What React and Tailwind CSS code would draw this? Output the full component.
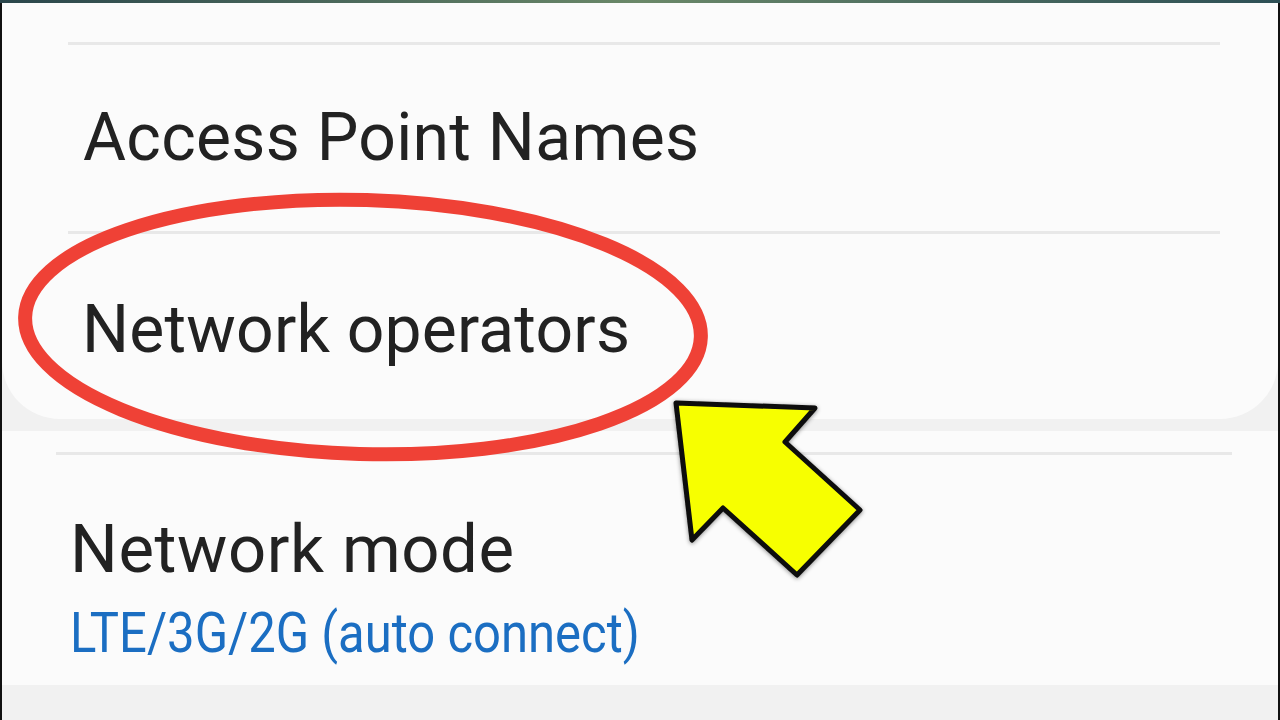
import React from 'react';

const Divider = ({ className = '' }) => (
  <div className={`h-[3px] bg-[#e8e8e8] ${className}`} />
);

// red circle + yellow arrow drawn on top of the screenshot
const Annotation = () => (
  <svg
    className="pointer-events-none absolute inset-0"
    width="1280"
    height="720"
    viewBox="0 0 1280 720"
  >
    <defs>
      <filter id="arrowShadow" x="-20%" y="-20%" width="140%" height="140%">
        <feDropShadow dx="0" dy="1" stdDeviation="2" floodColor="#000" floodOpacity="0.45" />
      </filter>
    </defs>
    <ellipse
      cx="363"
      cy="327"
      rx="338"
      ry="127"
      fill="none"
      stroke="#ef4136"
      strokeWidth="14"
      transform="rotate(1.7 363 327)"
    />
    <polygon
      points="676,403 815,408 785,442 860,510 797,575 723,508 692,540"
      fill="#f7ff00"
      stroke="#0a0a0a"
      strokeWidth="5"
      strokeLinejoin="round"
      filter="url(#arrowShadow)"
    />
  </svg>
);

export default function App() {
  return (
    <div className="relative h-[720px] w-[1280px] overflow-hidden bg-[#f1f1f1] font-[Roboto,sans-serif]">
      <div className="h-[3px] bg-linear-to-r from-[#2a464b] via-[#6a8868] to-[#2d4f55]" />

      <div className="flex h-[717px] flex-col border-x-2 border-[#111]">
        {/* top card */}
        <div className="flex h-[416px] flex-col rounded-b-[58px] bg-[#fbfbfb] pt-[39px]">
          <Divider className="ml-[66px] w-[1152px]" />
          <div className="flex h-[186px] items-center pl-[81px]">
            <span className="text-[66px] leading-none tracking-[0.3px] text-[#222]">Access Point Names</span>
          </div>
          <Divider className="ml-[66px] w-[1152px]" />
          <div className="flex flex-1 items-center pl-[80px] pt-[6px]">
            <span className="text-[66px] leading-none tracking-[0.2px] text-[#222]">Network operators</span>
          </div>
        </div>

        {/* second card */}
        <div className="mt-[12px] flex h-[254px] flex-col bg-[#fbfbfb] pt-[21px]">
          <Divider className="ml-[54px] w-[1176px]" />
          <div className="flex flex-col items-start pl-[68px] pt-[61px]">
            <span className="text-[67px] leading-none tracking-[0.6px] text-[#222]">Network mode</span>
            <span className="mt-[22px] inline-block origin-left scale-x-[0.875] text-[56px] leading-none text-[#1b6ec2]">
              LTE/3G/2G (auto connect)
            </span>
          </div>
        </div>

        <div className="flex-1 bg-[#f1f1f1]" />
      </div>

      <Annotation />
    </div>
  );
}
